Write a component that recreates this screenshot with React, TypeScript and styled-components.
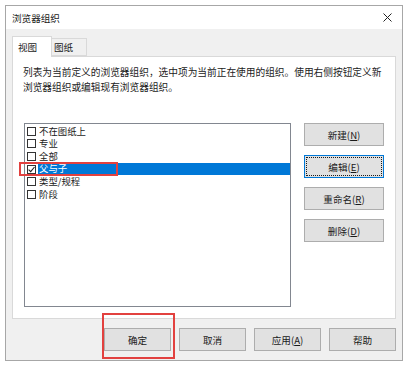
import React from "react";
import styled, { createGlobalStyle, css } from "styled-components";

const GlobalStyle = createGlobalStyle`
  html, body {
    margin: 0;
    padding: 0;
    background: #ffffff;
  }
  * {
    box-sizing: border-box;
  }
  body {
    font-family: "Noto Sans CJK SC", "Noto Sans", sans-serif;
    color: #1a1a1a;
  }
`;

const Page = styled.div`
  padding: 5px;
  width: 408px;
  height: 367px;
`;

const Dialog = styled.div`
  width: 398px;
  height: 356px;
  border: 1px solid #a7a7a7;
  background: #f0f0f0;
  display: flex;
  flex-direction: column;
`;

const TitleBar = styled.div`
  height: 23px;
  background: #ffffff;
  display: flex;
  align-items: center;
  justify-content: space-between;
  padding: 0 10px 0 6px;
  font-size: 9.6px;
  color: #1a1a1a;
`;

const Body = styled.div`
  flex: 1;
  display: flex;
  flex-direction: column;
  padding: 7px 6px 0 6px;
`;

const TabStrip = styled.div`
  display: flex;
  align-items: flex-end;
  height: 20px;
  position: relative;
  z-index: 1;
`;

const Tab = styled.div<{ $active?: boolean }>`
  font-size: 9.6px;
  display: flex;
  align-items: center;
  border: 1px solid #d9d9d9;
  ${(p) =>
    p.$active
      ? css`
          width: 40px;
          height: 21px;
          margin-bottom: -1px;
          background: #ffffff;
          border-bottom: none;
          padding: 0 0 0 5px;
        `
      : css`
          width: 35px;
          height: 18px;
          background: #f0f0f0;
          border-left: none;
          padding: 0 0 0 2px;
        `}
`;

const Panel = styled.div`
  width: 384px;
  height: 263px;
  background: #ffffff;
  border: 1px solid #d9d9d9;
  display: flex;
  flex-direction: column;
  padding: 8px 10px 0 10px;
`;

const Description = styled.p`
  margin: 0;
  font-size: 9.7px;
  line-height: 15px;
  color: #222222;
`;

const Content = styled.div`
  display: flex;
  gap: 13px;
  margin-top: 28px;
  padding-left: 1px;
`;

const ListBox = styled.div`
  width: 267px;
  height: 184px;
  border: 1px solid #828790;
  background: #ffffff;
  padding-top: 1px;
  display: flex;
  flex-direction: column;
`;

const Row = styled.div<{ $selected?: boolean }>`
  position: relative;
  height: 12.6px;
  display: flex;
  align-items: center;
  padding-left: 2px;
  font-size: 9.4px;
`;

const Label = styled.span<{ $selected?: boolean }>`
  flex: 1;
  height: 100%;
  display: flex;
  align-items: center;
  padding-left: 1px;
  line-height: 1;
  ${(p) =>
    p.$selected &&
    css`
      background: #0078d7;
      color: #ffffff;
    `}
`;

const Check = styled.span`
  width: 9px;
  height: 9px;
  border: 1px solid #333333;
  background: #ffffff;
  flex-shrink: 0;
  margin-right: 2px;
  display: flex;
  align-items: center;
  justify-content: center;
`;

const Highlight = styled.span`
  position: absolute;
  border: 2px solid #e2413f;
  pointer-events: none;
`;

const RowHighlight = styled(Highlight)`
  left: -6px;
  top: -1px;
  width: 99px;
  height: 14px;
`;

const ButtonColumn = styled.div`
  display: flex;
  flex-direction: column;
  gap: 9px;
`;

const Button = styled.div<{ $focused?: boolean; $width?: number }>`
  position: relative;
  width: ${(p) => p.$width ?? 80}px;
  height: 23px;
  background: #e1e1e1;
  border: 1px solid #adadad;
  font-size: 9.6px;
  display: flex;
  align-items: center;
  justify-content: center;
  color: #1a1a1a;
  u {
    text-underline-offset: 1px;
  }
  ${(p) =>
    p.$focused &&
    css`
      border-color: #0078d7;
      &::after {
        content: "";
        position: absolute;
        inset: 1px;
        border: 1px dotted #1a1a1a;
      }
    `}
`;

const Footer = styled.div`
  display: flex;
  justify-content: flex-end;
  gap: 8px;
  margin-top: 9px;
`;

const OkHighlight = styled(Highlight)`
  left: -3px;
  top: -16px;
  width: 73px;
  height: 46px;
`;

const CloseIcon = () => (
  <svg width="9" height="9" viewBox="0 0 9 9">
    <path d="M0.5 0.5 L8.5 8.5 M8.5 0.5 L0.5 8.5" stroke="#222" strokeWidth="1" />
  </svg>
);

const Tick = () => (
  <svg width="7" height="7" viewBox="0 0 7 7">
    <path d="M0.6 3.6 L2.7 5.7 L6.5 1" stroke="#222" strokeWidth="1.1" fill="none" />
  </svg>
);

const items = ["不在图纸上", "专业", "全部", "父与子", "类型/规程", "阶段"];
const selectedIndex = 3;

export default function App() {
  return (
    <>
      <GlobalStyle />
      <Page>
        <Dialog>
          <TitleBar>
            <span>浏览器组织</span>
            <CloseIcon />
          </TitleBar>
          <Body>
            <TabStrip>
              <Tab $active>视图</Tab>
              <Tab>图纸</Tab>
            </TabStrip>
            <Panel>
              <Description>
                列表为当前定义的浏览器组织，选中项为当前正在使用的组织。使用右侧按钮定义新
                <br />
                浏览器组织或编辑现有浏览器组织。
              </Description>
              <Content>
                <ListBox>
                  {items.map((item, i) => (
                    <Row key={item}>
                      <Check>{i === selectedIndex && <Tick />}</Check>
                      <Label $selected={i === selectedIndex}>{item}</Label>
                      {i === selectedIndex && <RowHighlight />}
                    </Row>
                  ))}
                </ListBox>
                <ButtonColumn>
                  <Button>
                    新建(<u>N</u>)
                  </Button>
                  <Button $focused>
                    编辑(<u>E</u>)
                  </Button>
                  <Button>
                    重命名(<u>R</u>)
                  </Button>
                  <Button>
                    删除(<u>D</u>)
                  </Button>
                </ButtonColumn>
              </Content>
            </Panel>
            <Footer>
              <Button $width={67}>
                确定
                <OkHighlight />
              </Button>
              <Button $width={67}>取消</Button>
              <Button $width={67}>
                应用(<u>A</u>)
              </Button>
              <Button $width={67}>帮助</Button>
            </Footer>
          </Body>
        </Dialog>
      </Page>
    </>
  );
}
